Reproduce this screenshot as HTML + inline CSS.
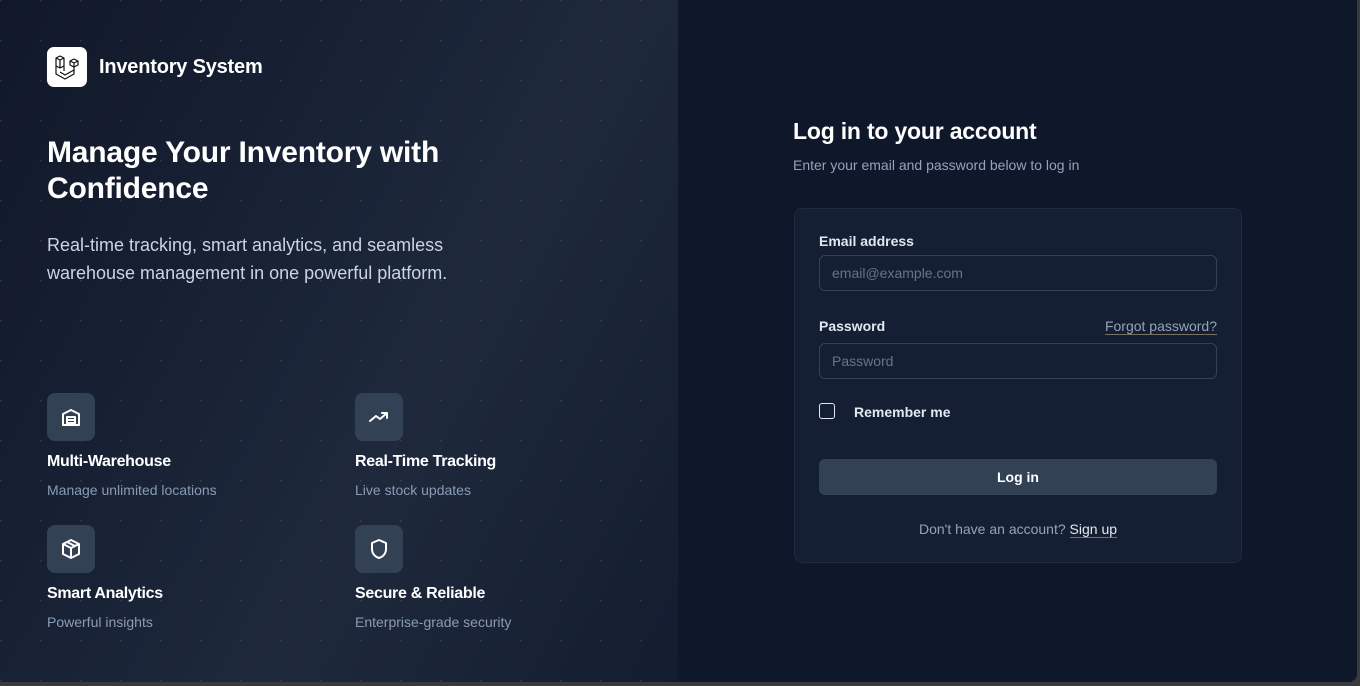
<!DOCTYPE html>
<html><head><meta charset="utf-8"><style>
*{box-sizing:border-box;margin:0;padding:0}
html,body{width:1360px;height:686px;overflow:hidden;background:#3a3a3a;font-family:"Liberation Sans",sans-serif}
.win{position:absolute;left:0;top:0;width:1357px;height:682px;border-bottom-right-radius:8px;overflow:hidden;background:#0f172a}
.left{position:absolute;left:0;top:0;width:678px;height:682px;background:linear-gradient(118deg,#101829 0%,#1b2538 48%,#1e293b 60%,#141d30 100%)}
.dots{position:absolute;inset:0;background-image:radial-gradient(circle at 0.5px 0.5px,rgba(148,163,184,.2) 1.2px,transparent 1.3px);background-size:40px 40px}
.logo{position:absolute;left:47px;top:47px;width:40px;height:40px;background:#fff;border-radius:7px}
.brand{position:absolute;left:99px;top:56px;color:#fff;font-size:20px;font-weight:bold;letter-spacing:-.2px}
h1{position:absolute;left:47px;top:135px;color:#fff;font-size:30px;line-height:36px;font-weight:bold;letter-spacing:-.2px;width:470px}
.sub{position:absolute;left:47px;top:231px;color:#cbd5e1;font-size:18px;line-height:28px;width:460px}
.f{position:absolute}
.f .ic{width:48px;height:48px;border-radius:8px;background:#334155;display:flex;align-items:center;justify-content:center}
.f .t{color:#fff;font-weight:bold;font-size:16px;margin-top:12px;letter-spacing:-.3px}
.f .d{color:#8a9bb5;font-size:14px;margin-top:11px}
.title{position:absolute;left:793px;top:118px;color:#fff;font-size:23px;font-weight:bold;letter-spacing:-.2px}
.desc{position:absolute;left:793px;top:157px;color:#94a3b8;font-size:14px}
.card{position:absolute;left:794px;top:208px;width:448px;height:355px;background:#151f33;border:1px solid #1f2a3d;border-radius:8px}
.lbl{position:absolute;color:#e2e8f0;font-size:14px;font-weight:bold}
.inp{position:absolute;left:24px;width:398px;height:36px;border:1px solid #334155;border-radius:6px;color:#64748b;font-size:14px;padding:9px 12px}
.btn{position:absolute;left:24px;top:250px;width:398px;height:36px;background:#334155;border-radius:6px;color:#fff;font-weight:bold;font-size:14px;text-align:center;line-height:36px}
</style></head><body><div class="win">
<div class="left"><div class="dots"></div>
<div class="logo"><svg width="40" height="40" viewBox="0 0 40 40" fill="none" stroke="#111" stroke-width="1.2" stroke-linejoin="round"><path d="M9 11l4-2 4 2v8l-4 2-4-2zM9 11l4 2 4-2M13 13v8"/><path d="M9 19v8l9 5 9-5v-4l-9 5-5-3"/><path d="M17 19v5M23 14l4-2 4 2v4l-4 2-4-2zM23 14l4 2 4-2M27 16v4M27 20v3"/></svg></div>
<div class="brand">Inventory System</div>
<h1>Manage Your Inventory with Confidence</h1>
<div class="sub">Real-time tracking, smart analytics, and seamless warehouse management in one powerful platform.</div>
<div class="f" style="left:47px;top:393px"><div class="ic"><svg width="24" height="24" viewBox="0 0 24 24" fill="none" stroke="#fff" stroke-width="2" stroke-linejoin="round"><path d="M4 20V9l8-4 8 4v11z"/><path d="M8 20v-8h8v8M8 15h8M8 18h8"/></svg></div><div class="t">Multi-Warehouse</div><div class="d">Manage unlimited locations</div></div>
<div class="f" style="left:355px;top:393px"><div class="ic"><svg width="24" height="24" viewBox="0 0 24 24" fill="none" stroke="#fff" stroke-width="2" stroke-linecap="round" stroke-linejoin="round"><path d="M3 16l6-5 4 3 7-6M15 8h5v5"/></svg></div><div class="t">Real-Time Tracking</div><div class="d">Live stock updates</div></div>
<div class="f" style="left:47px;top:525px"><div class="ic"><svg width="24" height="24" viewBox="0 0 24 24" fill="none" stroke="#fff" stroke-width="2" stroke-linejoin="round"><path d="M12 3l8 4v10l-8 4-8-4V7z"/><path d="M4 7l8 4 8-4M12 11v10M8 5l8 4"/></svg></div><div class="t">Smart Analytics</div><div class="d">Powerful insights</div></div>
<div class="f" style="left:355px;top:525px"><div class="ic"><svg width="24" height="24" viewBox="0 0 24 24" fill="none" stroke="#fff" stroke-width="2" stroke-linejoin="round"><path d="M12 3l7 3v6c0 5-3.5 8-7 9-3.5-1-7-4-7-9V6z"/></svg></div><div class="t">Secure &amp; Reliable</div><div class="d">Enterprise-grade security</div></div>
</div>
<div class="title">Log in to your account</div>
<div class="desc">Enter your email and password below to log in</div>
<div class="card">
<div class="lbl" style="left:24px;top:24px">Email address</div>
<div class="inp" style="top:46px">email@example.com</div>
<div class="lbl" style="left:24px;top:109px">Password</div>
<div style="position:absolute;right:24px;top:109px;color:#94a3b8;font-size:14px;border-bottom:1px solid #7a6f60;line-height:16px">Forgot password?</div>
<div class="inp" style="top:134px">Password</div>
<div style="position:absolute;left:24px;top:194px;width:16px;height:16px;border:1px solid #e2e8f0;border-radius:3px"></div>
<div class="lbl" style="left:59px;top:195px">Remember me</div>
<div class="btn">Log in</div>
<div style="position:absolute;left:0;width:446px;top:312px;text-align:center;color:#94a3b8;font-size:14px">Don't have an account? <span style="color:#e2e8f0;border-bottom:1px solid #7a6f60">Sign up</span></div>
</div>
</div></body></html>
